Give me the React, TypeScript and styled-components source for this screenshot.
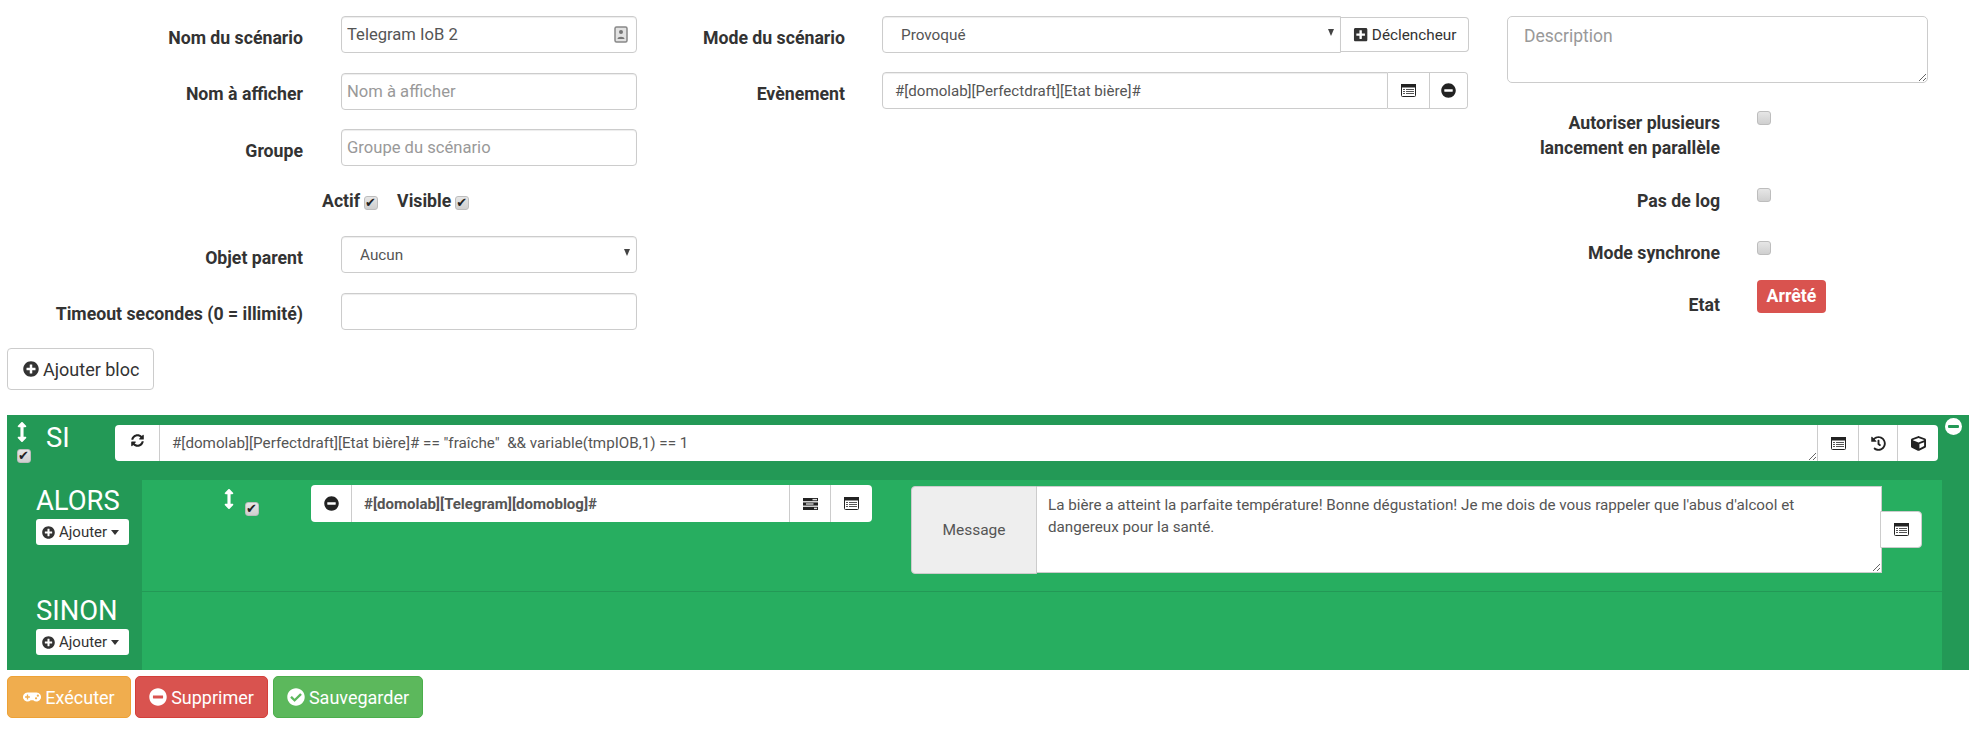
import React from 'react';
import styled, { createGlobalStyle } from 'styled-components';
import {
  FaArrowsAltV, FaCheckCircle, FaCube, FaGamepad, FaHistory, FaMinusCircle, FaPlusCircle, FaPlusSquare, FaSyncAlt,
} from 'react-icons/fa';

const GlobalStyle = createGlobalStyle`
  html, body { margin: 0; padding: 0; background: #fff; }
  body { font-family: Roboto, "Liberation Sans", sans-serif; color: #333; overflow: hidden; }
  * { box-sizing: border-box; }
`;

const Page = styled.div`
  width: 1969px;
  height: 735px;
  padding-top: 16px;
`;

const Top = styled.div`
  display: flex;
  align-items: flex-start;
  height: 332px;
`;

const LeftColumn = styled.div`
  width: 637px;
  display: flex;
  flex-direction: column;
  gap: 19.5px;
`;

const MiddleColumn = styled.div`
  width: 831px;
  display: flex;
  flex-direction: column;
  gap: 19px;
`;

const RightColumn = styled.div`
  width: 459px;
  margin-left: 39px;
`;

const Row = styled.div`
  display: flex;
  align-items: center;
  height: 37px;
`;

const Label = styled.label<{ $w: number }>`
  width: ${(p) => p.$w}px;
  flex: none;
  text-align: right;
  font-size: 17.7px;
  font-weight: 700;
  color: #333;
  padding-top: 6px;
`;

const Input = styled.input`
  height: 37px;
  width: 296px;
  margin-left: 38px;
  padding: 0 5px;
  border: 1px solid #ccc;
  border-radius: 4px;
  box-shadow: inset 0 1px 1px rgba(0, 0, 0, .075);
  font: 400 16.6px Roboto, sans-serif;
  color: #555;
  outline: none;
  &::placeholder { color: #999; opacity: 1; }
`;

const FieldWrap = styled.div`
  position: relative;
  display: flex;
`;

const ContactIcon = styled.svg`
  position: absolute;
  right: 9px;
  top: 10px;
  width: 14px;
  height: 17px;
`;

const SelectBox = styled.select<{ $w: number; $ml: number; $flat?: boolean }>`
  appearance: none;
  height: 37px;
  width: ${(p) => p.$w}px;
  margin-left: ${(p) => p.$ml}px;
  padding: 0 18px;
  background: #fff;
  border: 1px solid #ccc;
  border-radius: ${(p) => (p.$flat ? '4px 0 0 4px' : '4px')};
  box-shadow: inset 0 1px 1px rgba(0, 0, 0, .075);
  font: 400 15.3px Roboto, sans-serif;
  color: #555;
`;

const Caret = styled.span`
  position: absolute;
  right: 7px;
  top: 13px;
  width: 0;
  height: 0;
  border-left: 3.5px solid transparent;
  border-right: 3.5px solid transparent;
  border-top: 7px solid #444;
`;

const Checks = styled.div`
  display: flex;
  align-items: center;
  height: 41px;
  margin-left: 322px;
  gap: 19px;
  margin-top: -5px;
  margin-bottom: -5px;
`;

const CheckItem = styled.label`
  display: flex;
  align-items: center;
  gap: 4px;
  font-size: 17.7px;
  font-weight: 700;
`;

const Tick = styled.input.attrs({ type: 'checkbox', readOnly: true })<{ $drop?: number }>`
  appearance: none;
  display: block;
  flex: none;
  position: relative;
  width: 14px;
  height: 14px;
  margin: ${(p) => p.$drop ?? 0}px 0 0;
  border: 1px solid #bdbdbd;
  border-radius: 3px;
  background: linear-gradient(#e6e6e6, #cfcfcf);
  &:checked::after {
    content: '✔';
    position: absolute;
    left: 0;
    top: -2px;
    font: 700 13px/16px "DejaVu Sans", sans-serif;
    color: #222;
  }
`;

const AddBlock = styled.button`
  display: flex;
  align-items: center;
  gap: 4px;
  height: 42px;
  width: 147px;
  margin-left: 7px;
  padding: 0 15px;
  background: #fff;
  border: 1px solid #ccc;
  border-radius: 4px;
  font: 400 18px Roboto, sans-serif;
  color: #333;
  white-space: nowrap;
  svg { font-size: 16px; flex: none; }
`;

const AttachedButton = styled.button<{ $w: number }>`
  flex: none;
  display: flex;
  align-items: center;
  justify-content: center;
  gap: 4px;
  width: ${(p) => p.$w}px;
  height: 100%;
  padding: 0;
  background: #fff;
  border: 1px solid #ccc;
  border-left: none;
  border-radius: 0 4px 4px 0;
  font: 400 15.3px Roboto, sans-serif;
  color: #333;
`;

const EventInput = styled(Input)`
  width: 506px;
  margin-left: 37px;
  border-radius: 4px 0 0 4px;
  padding: 0 12px;
  font-size: 15.1px;
`;

const Description = styled.textarea`
  display: block;
  width: 421px;
  height: 67px;
  padding: 9px 16px;
  border: 1px solid #ccc;
  border-radius: 5px;
  font: 400 17.5px Roboto, sans-serif;
  color: #555;
  outline: none;
  &::placeholder { color: #999; opacity: 1; }
`;

const OptionRow = styled.div<{ $h: number }>`
  display: flex;
  align-items: flex-start;
  height: ${(p) => p.$h}px;
`;

const OptionLabel = styled.div<{ $top?: number }>`
  width: 213px;
  padding-top: ${(p) => p.$top ?? 0}px;
  text-align: right;
  font-size: 17.7px;
  font-weight: 700;
  line-height: 25px;
  color: #333;
`;

const OptionValue = styled.div`
  margin-left: 37px;
`;

const Badge = styled.span`
  display: block;
  width: 69px;
  height: 33px;
  background: #d9534f;
  border-radius: 4px;
  color: #fff;
  font-size: 17.7px;
  font-weight: 700;
  line-height: 32px;
  text-align: center;
`;

const Options = styled.div`
  margin-top: 28px;
`;

const Block = styled.section`
  position: relative;
  margin: 25px 0 0 7px;
  width: 1962px;
  height: 255px;
  background: #239956;
`;

const Head = styled.div`
  display: flex;
  height: 65px;
  padding-top: 10px;
`;

const Handle = styled.div`
  width: 39px;
  padding-left: 10px;
  color: #fff;
  font-size: 20px;
  display: flex;
  flex-direction: column;
  align-items: flex-start;
  gap: 7px;
`;

const HandleIcon = styled(FaArrowsAltV)`
  margin-left: -5px;
  margin-top: -3px;
`;

const Title = styled.div`
  font-size: 27.4px;
  color: #fff;
  line-height: 26px;
`;

const SiTitle = styled(Title)`
  width: 69px;
`;

const Group = styled.div<{ $w: number; $h?: number }>`
  display: flex;
  width: ${(p) => p.$w}px;
  height: ${(p) => p.$h ?? 36}px;
  flex: none;
`;

const BorderedGroup = styled(Group)`
  border: 1px solid #ccc;
  border-left: none;
  border-radius: 0 4px 4px 0;
`;

const GroupText = styled.textarea`
  flex: 1;
  min-width: 0;
  padding: 8px 12px;
  border: none;
  border-left: 1px solid #ccc;
  background: #fff;
  font: 400 15.2px/20px Roboto, sans-serif;
  color: #555;
  outline: none;
`;

const SquareButton = styled.button<{ $w: number }>`
  flex: none;
  display: flex;
  align-items: center;
  justify-content: center;
  width: ${(p) => p.$w}px;
  height: 100%;
  padding: 0;
  background: #fff;
  border: none;
  border-left: 1px solid #ccc;
  color: #222;
  font-size: 15px;
  &:first-child { border-left: none; border-radius: 4px 0 0 4px; }
  &:last-child { border-radius: 0 4px 4px 0; }
`;

const RefreshIcon = styled(FaSyncAlt)`
  font-size: 13px;
  margin-bottom: 5px;
`;

const RemoveBlock = styled.span`
  position: absolute;
  right: 7px;
  top: 3px;
  width: 17px;
  height: 17px;
  border-radius: 50%;
  background: #fff;
  display: flex;
  align-items: center;
  justify-content: center;
  &::after {
    content: '';
    width: 11px;
    height: 3px;
    background: #239956;
    border-radius: 1px;
  }
`;

const Section = styled.div<{ $h: number }>`
  display: flex;
  height: ${(p) => p.$h}px;
`;

const SectionSide = styled.div<{ $top: number }>`
  width: 135px;
  flex: none;
  padding: ${(p) => p.$top}px 0 0 29px;
`;

const SectionBody = styled.div<{ $line?: boolean }>`
  width: 1800px;
  display: flex;
  align-items: flex-start;
  background: #27ae60;
  border-bottom: ${(p) => (p.$line ? '1px solid #239956' : 'none')};
  padding-top: 5px;
`;

const AddAction = styled.button`
  display: flex;
  align-items: center;
  gap: 4px;
  width: 93px;
  height: 26px;
  margin-top: 5px;
  padding: 0 0 0 6px;
  background: #fff;
  border: none;
  border-radius: 3px;
  font: 400 15px Roboto, sans-serif;
  color: #333;
  svg { font-size: 13px; }
`;

const Arrow = styled.span`
  width: 0;
  height: 0;
  border-left: 4.5px solid transparent;
  border-right: 4.5px solid transparent;
  border-top: 5px solid #333;
`;

const ActionHandle = styled.div`
  display: flex;
  align-items: flex-start;
  width: 169px;
  padding-left: 77px;
  gap: 6px;
  color: #fff;
  font-size: 20px;
  svg { margin-top: 4px; }
`;

const ActionInput = styled.input`
  flex: 1;
  min-width: 0;
  padding: 0 12px;
  border: none;
  border-left: 1px solid #ccc;
  font: 700 15px Roboto, sans-serif;
  color: #555;
  outline: none;
`;

const MessageGroup = styled.div`
  display: flex;
  margin-left: 39px;
  margin-top: 1px;
  align-items: flex-start;
`;

const MessageLabel = styled.div`
  display: flex;
  align-items: center;
  justify-content: center;
  width: 126px;
  height: 88px;
  background: #eee;
  border: 1px solid #ccc;
  border-radius: 4px 0 0 4px;
  font-size: 15.5px;
  color: #555;
`;

const MessageText = styled.textarea`
  display: block;
  width: 845px;
  height: 87px;
  padding: 7px 40px 0 11px;
  border: 1px solid #ccc;
  border-left: none;
  background: #fff;
  font: 400 15.2px/22px Roboto, sans-serif;
  color: #555;
  outline: none;
`;

const MessageButton = styled.button`
  display: flex;
  align-items: center;
  justify-content: center;
  width: 42px;
  height: 37px;
  margin: 25px 0 0 -2px;
  padding: 0;
  position: relative;
  background: #fff;
  border: 1px solid #ccc;
  border-radius: 0 4px 4px 0;
`;

const Footer = styled.div`
  display: flex;
  margin: 6px 0 0 7px;
`;

const ActionButton = styled.button<{ $bg: string; $border: string; $w: number; $mr: number }>`
  display: flex;
  align-items: center;
  justify-content: center;
  gap: 4px;
  width: ${(p) => p.$w}px;
  margin-right: ${(p) => p.$mr}px;
  height: 42px;
  padding: 0;
  background: ${(p) => p.$bg};
  border: 1px solid ${(p) => p.$border};
  border-radius: 5px;
  font: 400 18px Roboto, sans-serif;
  color: #fff;
`;

function ListIcon() {
  return (
    <svg width="15" height="13" viewBox="0 0 15 13">
      <rect x="0.5" y="0.5" width="14" height="12" rx="1" fill="#fff" stroke="#222" />
      <rect x="0" y="0" width="15" height="3.5" fill="#222" />
      <path d="M2 5.5h2M2 7.5h2M2 9.5h2M5 5.5h8M5 7.5h8M5 9.5h8" stroke="#555" strokeWidth="1" />
    </svg>
  );
}

// barres de la commande (fa-tasks)
function TasksIcon() {
  return (
    <svg width="15" height="12" viewBox="0 0 15 12">
      <rect x="0" y="0" width="15" height="3.2" fill="#222" />
      <rect x="9.5" y="0.9" width="4.5" height="1.4" fill="#ddd" />
      <rect x="0" y="4.4" width="15" height="3.2" fill="#222" />
      <rect x="3" y="5.1" width="7.5" height="1.8" fill="#aaa" />
      <rect x="0" y="8.8" width="15" height="3.2" fill="#222" />
      <rect x="11" y="9.7" width="3" height="1.4" fill="#ddd" />
    </svg>
  );
}

export default function App(): React.ReactElement {
  return (
    <Page>
      <GlobalStyle />
      <Top>
        <LeftColumn>
          <Row>
            <Label $w={303}>Nom du scénario</Label>
            <FieldWrap>
              <Input readOnly value="Telegram IoB 2" />
              <ContactIcon viewBox="0 0 14 17">
                <rect x="1" y="1" width="12" height="15" rx="1.5" fill="#e2e2e2" stroke="#888" strokeWidth="1.5" />
                <circle cx="7" cy="6" r="2" fill="#777" />
                <path d="M3.5 13c0-3 7-3 7 0z" fill="#777" />
              </ContactIcon>
            </FieldWrap>
          </Row>
          <Row>
            <Label $w={303}>Nom à afficher</Label>
            <Input placeholder="Nom à afficher" />
          </Row>
          <Row>
            <Label $w={303}>Groupe</Label>
            <Input placeholder="Groupe du scénario" />
          </Row>
          <Checks>
            <CheckItem>
              Actif
              <Tick defaultChecked $drop={4} />
            </CheckItem>
            <CheckItem>
              Visible
              <Tick defaultChecked $drop={4} />
            </CheckItem>
          </Checks>
          <Row>
            <Label $w={303}>Objet parent</Label>
            <FieldWrap>
              <SelectBox $w={296} $ml={38}><option>Aucun</option></SelectBox>
              <Caret />
            </FieldWrap>
          </Row>
          <Row>
            <Label $w={303}>Timeout secondes (0 = illimité)</Label>
            <Input readOnly />
          </Row>
        </LeftColumn>
        <MiddleColumn>
          <Row>
            <Label $w={208}>Mode du scénario</Label>
            <FieldWrap>
              <SelectBox $w={459} $ml={37} $flat><option>Provoqué</option></SelectBox>
              <Caret />
            </FieldWrap>
            <Group $w={128} $h={35}>
              <AttachedButton $w={128}>
                <FaPlusSquare />
                Déclencheur
              </AttachedButton>
            </Group>
          </Row>
          <Row>
            <Label $w={208}>Evènement</Label>
            <EventInput readOnly value="#[domolab][Perfectdraft][Etat bière]#" />
            <BorderedGroup $w={80} $h={37}>
              <SquareButton $w={41}><ListIcon /></SquareButton>
              <SquareButton $w={38}><FaMinusCircle /></SquareButton>
            </BorderedGroup>
          </Row>
        </MiddleColumn>
        <RightColumn>
          <Description placeholder="Description" />
          <Options>
            <OptionRow $h={77}>
              <OptionLabel>
                Autoriser plusieurs
                <br />
                lancement en parallèle
              </OptionLabel>
              <OptionValue><Tick /></OptionValue>
            </OptionRow>
            <OptionRow $h={53}>
              <OptionLabel $top={1}>Pas de log</OptionLabel>
              <OptionValue><Tick /></OptionValue>
            </OptionRow>
            <OptionRow $h={39}>
              <OptionLabel>Mode synchrone</OptionLabel>
              <OptionValue><Tick /></OptionValue>
            </OptionRow>
            <OptionRow $h={33}>
              <OptionLabel $top={13}>Etat</OptionLabel>
              <OptionValue><Badge>Arrêté</Badge></OptionValue>
            </OptionRow>
          </Options>
        </RightColumn>
      </Top>
      <AddBlock>
        <FaPlusCircle />
        Ajouter bloc
      </AddBlock>
      <Block>
        <RemoveBlock />
        <Head>
          <Handle>
            <HandleIcon />
            <Tick defaultChecked />
          </Handle>
          <SiTitle>SI</SiTitle>
          <Group $w={1823}>
            <SquareButton $w={44}><RefreshIcon /></SquareButton>
            <GroupText readOnly value={'#[domolab][Perfectdraft][Etat bière]# == "fraîche"  && variable(tmpIOB,1) == 1'} />
            <SquareButton $w={41}><ListIcon /></SquareButton>
            <SquareButton $w={39}><FaHistory /></SquareButton>
            <SquareButton $w={41}><FaCube /></SquareButton>
          </Group>
        </Head>
        <Section $h={112}>
          <SectionSide $top={8}>
            <Title>ALORS</Title>
            <AddAction>
              <FaPlusCircle />
              Ajouter
              <Arrow />
            </AddAction>
          </SectionSide>
          <SectionBody $line>
            <ActionHandle>
              <FaArrowsAltV />
              <Tick defaultChecked $drop={17} />
            </ActionHandle>
            <Group $w={561} $h={37}>
              <SquareButton $w={40}><FaMinusCircle /></SquareButton>
              <ActionInput readOnly value="#[domolab][Telegram][domoblog]#" />
              <SquareButton $w={41}><TasksIcon /></SquareButton>
              <SquareButton $w={42}><ListIcon /></SquareButton>
            </Group>
            <MessageGroup>
              <MessageLabel>Message</MessageLabel>
              <MessageText
                readOnly
                value="La bière a atteint la parfaite température! Bonne dégustation! Je me dois de vous rappeler que l'abus d'alcool et dangereux pour la santé."
              />
              <MessageButton><ListIcon /></MessageButton>
            </MessageGroup>
          </SectionBody>
        </Section>
        <Section $h={78}>
          <SectionSide $top={6}>
            <Title>SINON</Title>
            <AddAction>
              <FaPlusCircle />
              Ajouter
              <Arrow />
            </AddAction>
          </SectionSide>
          <SectionBody />
        </Section>
      </Block>
      <Footer>
        <ActionButton $bg="#f0ad4e" $border="#eea236" $w={124} $mr={4}>
          <FaGamepad />
          Exécuter
        </ActionButton>
        <ActionButton $bg="#d9534f" $border="#d43f3a" $w={133} $mr={5}>
          <FaMinusCircle />
          Supprimer
        </ActionButton>
        <ActionButton $bg="#5cb85c" $border="#4cae4c" $w={150} $mr={0}>
          <FaCheckCircle />
          Sauvegarder
        </ActionButton>
      </Footer>
    </Page>
  );
}
